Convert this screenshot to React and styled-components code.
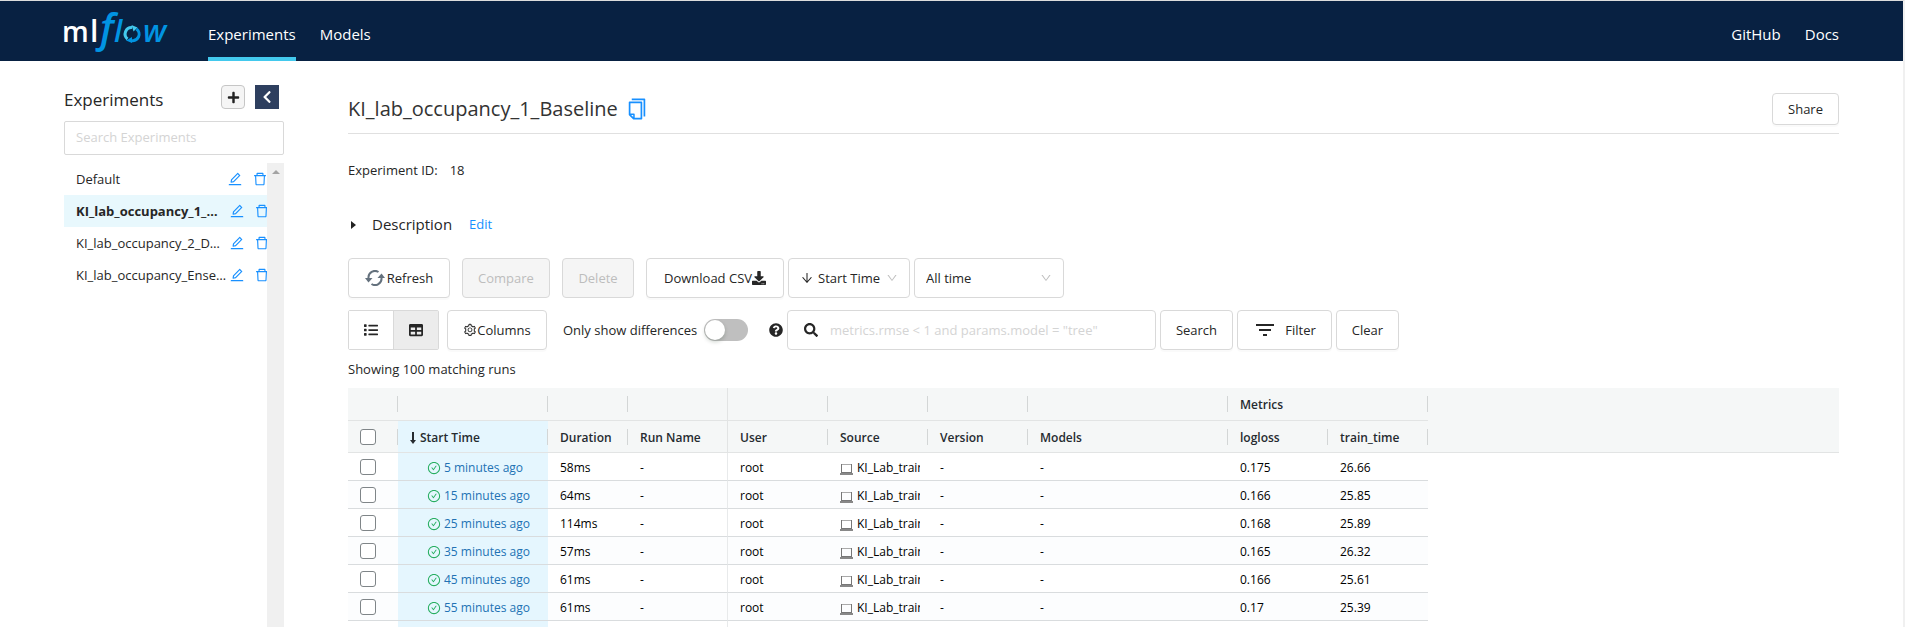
import React from "react";
import styled, { createGlobalStyle, css } from "styled-components";
import {
  AiOutlineArrowDown,
  AiOutlineCheckCircle,
  AiOutlineCopy,
  AiOutlineDelete,
  AiOutlineDown,
  AiOutlineEdit,
  AiOutlineSetting,
} from "react-icons/ai";
import {
  FaChevronLeft,
  FaDownload,
  FaList,
  FaPlus,
  FaQuestionCircle,
  FaSearch,
  FaTable,
} from "react-icons/fa";
import { MdFilterList } from "react-icons/md";

const GlobalStyle = createGlobalStyle`
  *, *::before, *::after { box-sizing: border-box; }
  body {
    margin: 0;
    overflow: hidden;
    background: #fff;
    color: #262626;
    font: 13px/20px "Open Sans", "Noto Sans", sans-serif;
  }
  button, input, select { font: inherit; color: inherit; margin: 0; }
  h1, h2, h3, p, ul { margin: 0; padding: 0; font-weight: 400; }
  svg { display: block; flex: none; }
  a { text-decoration: none; }
`;

const Page = styled.div`
  display: flex;
  flex-direction: column;
  height: 100vh;
  border-top: 1px solid #dcdcdc;
  border-right: 2px solid #f0f0f0;
`;

const Header = styled.header`
  display: flex;
  align-items: flex-start;
  height: 60px;
  flex: none;
  padding: 0 64px 0 60px;
  background: #082142;
`;

const LogoLink = styled.a`
  display: block;
  width: 148px;
`;

const Nav = styled.nav`
  display: flex;
  gap: 24px;
  margin-left: ${(p) => (p.$end ? "auto" : "0")};
`;

const NavLink = styled.a`
  height: 60px;
  padding-top: 23px;
  border-bottom: 4px solid ${(p) => (p.$active ? "#43c9ed" : "transparent")};
  color: #fff;
  font-size: 15px;
`;

const Body = styled.div`
  display: flex;
  gap: 64px;
  flex: 1;
  min-height: 0;
  padding: 0 64px;
`;

const Sidebar = styled.aside`
  display: flex;
  flex-direction: column;
  width: 220px;
  flex: none;
  padding-top: 24px;
`;

const SidebarHead = styled.div`
  display: flex;
  align-items: center;
  gap: 10px;
  height: 24px;
  padding-right: 5px;
  margin-bottom: 12px;
`;

const SidebarTitle = styled.h2`
  flex: 1;
  padding-top: 6px;
  font-size: 17px;
  line-height: 24px;
`;

const SquareButton = styled.button`
  display: grid;
  place-items: center;
  width: 24px;
  height: 24px;
  padding: 0;
  border: ${(p) => (p.$dark ? "0" : "1px solid #c6c6c6")};
  border-radius: ${(p) => (p.$dark ? "0" : "4px")};
  background: ${(p) => (p.$dark ? "#2e3f5f" : "#f5f5f5")};
  color: ${(p) => (p.$dark ? "#fff" : "#222")};
`;

const fieldBorder = css`
  border: 1px solid #d9d9d9;
  border-radius: 4px;
  background: #fff;
`;

const SidebarSearch = styled.input`
  ${fieldBorder}
  border-radius: 2px;
  width: 100%;
  height: 34px;
  padding: 0 11px 2px;
  &::placeholder { color: #d4d4d4; opacity: 1; }
`;

const ListArea = styled.div`
  display: flex;
  flex: 1;
  margin-top: 8px;
`;

const ExperimentList = styled.ul`
  flex: 1;
  min-width: 0;
  list-style: none;
`;

const ExperimentItem = styled.li`
  display: flex;
  align-items: center;
  height: 32px;
  padding-left: 12px;
  overflow: hidden;
  background: ${(p) => (p.$active ? "#e8f8fd" : "transparent")};
`;

const ExperimentName = styled.a`
  flex: none;
  width: ${(p) => (p.$short ? "151px" : "153px")};
  padding-right: ${(p) => (p.$active ? "4px" : "0")};
  overflow: hidden;
  white-space: nowrap;
  text-overflow: ellipsis;
  color: #262626;
  font-weight: ${(p) => (p.$active ? 700 : 400)};
`;

const IconButton = styled.button`
  flex: none;
  width: 16px;
  height: 16px;
  padding: 0;
  margin-right: 9px;
  border: 0;
  background: none;
  color: #1890ff;
`;

const ScrollTrack = styled.div`
  display: flex;
  justify-content: center;
  width: 17px;
  padding-top: 7px;
  background: #f0f0f0;
`;

const ScrollArrow = styled.span`
  width: 0;
  height: 0;
  border: 4px solid transparent;
  border-top: 0;
  border-bottom-color: #a3a3a3;
`;

const Main = styled.main`
  flex: 1;
  min-width: 0;
  padding-top: 32px;
`;

const TitleRow = styled.div`
  display: flex;
  align-items: center;
  gap: 7px;
  height: 41px;
  padding-bottom: 8px;
  border-bottom: 1px solid #e0e0e0;
`;

const Title = styled.h1`
  font-size: 20px;
  line-height: 28px;
  font-weight: 500;
  color: #333;
`;

const CopyButton = styled.button`
  padding: 0;
  border: 0;
  background: none;
  color: #1890ff;
`;

const Button = styled.button`
  ${fieldBorder}
  display: flex;
  align-items: center;
  justify-content: center;
  flex: none;
  gap: ${(p) => p.$gap || 0}px;
  width: ${(p) => p.$w}px;
  height: ${(p) => (p.$small ? 32 : 40)}px;
  padding: 0;
  box-shadow: 0 2px 0 rgba(0, 0, 0, 0.02);
  &:disabled {
    background: #f5f5f5;
    color: #bdbdbd;
    box-shadow: none;
  }
`;

const ShareSlot = styled.div`
  margin-left: auto;
`;

const Meta = styled.p`
  margin-top: 26px;
`;

const MetaLabel = styled.span`
  margin-right: 12px;
`;

const DescriptionRow = styled.div`
  display: flex;
  align-items: center;
  height: 24px;
  margin: 32px 0 22px;
`;

const Caret = styled.span`
  width: 0;
  height: 0;
  margin: 2px 16px 0 3px;
  border: 4px solid transparent;
  border-left: 5px solid #222;
  border-right: 0;
`;

const DescriptionTitle = styled.h3`
  margin-right: 17px;
  font-size: 15px;
  line-height: 24px;
`;

const BlueLink = styled.a`
  color: #1890ff;
`;

const Toolbar = styled.div`
  display: flex;
  align-items: center;
  gap: ${(p) => p.$gap}px;
  height: 40px;
  margin-bottom: 12px;
`;

const Cluster = styled.div`
  display: flex;
  align-items: center;
  gap: 4px;
`;

const SelectBox = styled.label`
  ${fieldBorder}
  display: flex;
  align-items: center;
  gap: 4px;
  width: ${(p) => p.$w}px;
  height: 40px;
  padding: 0 11px;
  svg:last-child { color: #bfbfbf; }
`;

const Select = styled.select`
  appearance: none;
  flex: 1;
  min-width: 0;
  padding: 0;
  border: 0;
  background: none;
  outline: 0;
`;

const ViewToggle = styled.div`
  ${fieldBorder}
  display: flex;
  width: 91px;
  height: 40px;
  margin-right: 8px;
  border-radius: 2px;
`;

const ViewOption = styled.button`
  display: grid;
  place-items: center;
  flex: 1;
  padding: 0;
  border: 0;
  border-left: ${(p) => (p.$active ? "1px solid #d9d9d9" : "0")};
  background: ${(p) => (p.$active ? "#ececec" : "#fff")};
`;

const SwitchLabel = styled.label`
  display: flex;
  align-items: center;
  gap: 5px;
  margin: 0 21px 0 16px;
  white-space: nowrap;
`;

const SwitchText = styled.span`
  width: 136px;
`;

const Switch = styled.input`
  appearance: none;
  display: flex;
  width: 44px;
  height: 22px;
  padding: 1px;
  border-radius: 11px;
  background: #bfbfbf;
  &::before {
    content: "";
    width: 20px;
    height: 20px;
    border-radius: 10px;
    background: #fff;
    box-shadow: 0 2px 4px rgba(0, 35, 11, 0.2);
  }
`;

const SearchBox = styled.label`
  ${fieldBorder}
  display: flex;
  align-items: center;
  gap: 12px;
  width: 369px;
  height: 40px;
  padding: 0 16px;
`;

const SearchInput = styled.input`
  flex: 1;
  min-width: 0;
  padding: 0;
  border: 0;
  outline: 0;
  background: none;
  &::placeholder { color: #d4d4d4; opacity: 1; }
`;

const Count = styled.p`
  margin: -3px 0 9px;
`;

const Table = styled.table`
  width: 100%;
  border-collapse: separate;
  border-spacing: 0;
  table-layout: fixed;
  font-size: 12px;
  line-height: 16px;
`;

const Col = styled.col`
  width: ${(p) => (p.$w ? `${p.$w}px` : "auto")};
`;

const HeadCell = styled.th`
  height: ${(p) => (p.$group ? 33 : 32)}px;
  padding: ${(p) => (p.$check ? "0 12px" : "2px 12px 0")};
  text-align: left;
  font-weight: 600;
  white-space: nowrap;
  color: #262b30;
  border-bottom: ${(p) => (p.$open ? "0" : "1px solid #e2e4e4")};
  background: ${(p) => (p.$sorted ? "#e5f6fe" : "#f5f7f7")};
  ${(p) =>
    p.$pinEdge
      ? "border-right: 1px solid #e2e4e4;"
      : !p.$last &&
        css`
          background-image: linear-gradient(#d3d6d6, #d3d6d6);
          background-repeat: no-repeat;
          background-size: 1px 16px;
          background-position: right center;
        `}
`;

const Row = styled.tr`
  background: ${(p) => (p.$odd ? "#fcfdfe" : "#fff")};
`;

const Cell = styled.td`
  height: 28px;
  padding: ${(p) => (p.$check ? "0 12px" : "2px 12px 0")};
  overflow: hidden;
  white-space: nowrap;
  color: #000;
  border-bottom: 1px solid #d9dcde;
  ${(p) => p.$sorted && "background: #e5f6fe;"}
  ${(p) => p.$pinEdge && "border-right: 1px solid #e8eaeb;"}
`;

const EmptyCell = styled.td`
  background: #fff;
`;

const Checkbox = styled.input`
  appearance: none;
  display: block;
  width: 16px;
  height: 16px;
  border: 1px solid #7f8588;
  border-radius: 3px;
  background: #fff;
`;

const SortLabel = styled.span`
  display: flex;
  align-items: center;
  gap: 4px;
`;

const RunLink = styled.a`
  display: flex;
  align-items: center;
  gap: 3px;
  padding-left: 17px;
  color: #2272b4;
  svg { color: #27ae60; }
`;

const SourceLine = styled.span`
  display: flex;
  align-items: center;
  gap: 4px;
  margin-right: -4px;
  overflow: hidden;
  svg { margin-top: 2px; }
`;

function MlflowLogo() {
  return (
    <svg width="112" height="60" viewBox="-4 0 112 60" role="img" aria-label="mlflow">
      <g fontFamily='"Open Sans", sans-serif' fontWeight="600">
        <text x="-2" y="41" fontSize="28" fill="#fff">m</text>
        <text x="26" y="41" fontSize="30" fill="#fff">l</text>
        <g fill="#0194e2" fontStyle="italic">
          <text x="36" y="41" fontSize="40">f</text>
          <text x="50" y="41" fontSize="30">l</text>
          <text x="79" y="41" fontSize="31">w</text>
        </g>
      </g>
      <g fill="none" strokeWidth="3">
        <path d="M63.500 38A6.500 6.500 0 0 1 68 26.500" stroke="#43c9ed" />
        <path d="M67 39.500A6.500 6.500 0 0 0 72.500 28" stroke="#0194e2" />
      </g>
      <path d="M67.500 24L73.500 26.500L69.500 30.500Z" fill="#43c9ed" />
      <path d="M68 36L62 39.500L68 42Z" fill="#0194e2" />
    </svg>
  );
}

function RefreshIcon() {
  return (
    <svg width="20" height="16" viewBox="0 0 20 16" aria-hidden="true">
      <g fill="none" stroke="#64717d" strokeWidth="2">
        <path d="M3.500 9V8A6.500 6.500 0 0 1 13.500 2" />
        <path d="M16.500 7V8A6.500 6.500 0 0 1 6.500 14" />
      </g>
      <path d="M0 8H7.500L3.500 12.500Z" fill="#64717d" />
      <path d="M12.500 8H20L16.500 3.500Z" fill="#64717d" />
    </svg>
  );
}

function SortArrowIcon() {
  return (
    <svg width="6" height="12" viewBox="0 0 6 12" aria-hidden="true">
      <path d="M2 0H4V8H6L3 12L0 8H2Z" fill="#262b30" />
    </svg>
  );
}

function LaptopIcon() {
  return (
    <svg width="13" height="12" viewBox="0 0 13 12" aria-hidden="true">
      <rect x="1.500" y="1.500" width="10" height="8" fill="none" stroke="#777" />
      <rect x="2" y="1" width="9" height="1" fill="#aaa" />
      <rect x="0" y="10" width="13" height="2" fill="#888" />
    </svg>
  );
}

const experiments = [
  "Default",
  "KI_lab_occupancy_1_Baseline",
  "KI_lab_occupancy_2_DNN",
  "KI_lab_occupancy_Ensemble",
];

const columns = [50, 150, 80, 100, 100, 100, 100, 200, 100, 100, null];

const runs = [
  ["5 minutes ago", "58ms", "0.175", "26.66"],
  ["15 minutes ago", "64ms", "0.166", "25.85"],
  ["25 minutes ago", "114ms", "0.168", "25.89"],
  ["35 minutes ago", "57ms", "0.165", "26.32"],
  ["45 minutes ago", "61ms", "0.166", "25.61"],
  ["55 minutes ago", "61ms", "0.17", "25.39"],
];

function ExperimentsPanel() {
  return (
    <Sidebar>
      <SidebarHead>
        <SidebarTitle>Experiments</SidebarTitle>
        <SquareButton aria-label="New experiment"><FaPlus size={13} /></SquareButton>
        <SquareButton $dark aria-label="Collapse sidebar"><FaChevronLeft size={14} /></SquareButton>
      </SidebarHead>
      <SidebarSearch placeholder="Search Experiments" aria-label="Search Experiments" />
      <ListArea>
        <ExperimentList>
          {experiments.map((name, i) => (
            <ExperimentItem key={name} $active={i === 1}>
              <ExperimentName href="#" $active={i === 1} $short={i === 0}>{name}</ExperimentName>
              <IconButton aria-label={`Rename ${name}`}><AiOutlineEdit size={16} /></IconButton>
              <IconButton aria-label={`Delete ${name}`}><AiOutlineDelete size={16} /></IconButton>
            </ExperimentItem>
          ))}
        </ExperimentList>
        <ScrollTrack><ScrollArrow /></ScrollTrack>
      </ListArea>
    </Sidebar>
  );
}

function RunsTable() {
  return (
    <Table>
      <colgroup>{columns.map((w, i) => <Col key={i} $w={w} />)}</colgroup>
      <thead>
        <tr>
          {[0, 1, 2, 3, 4, 5, 6, 7].map((i) => (
            <HeadCell key={i} $group $pinEdge={i === 3} />
          ))}
          <HeadCell $group colSpan={2}>Metrics</HeadCell>
          <HeadCell $group $open $last />
        </tr>
        <tr>
          <HeadCell $check><Checkbox type="checkbox" aria-label="Select all runs" /></HeadCell>
          <HeadCell $sorted>
            <SortLabel><SortArrowIcon />Start Time</SortLabel>
          </HeadCell>
          <HeadCell>Duration</HeadCell>
          <HeadCell $pinEdge>Run Name</HeadCell>
          <HeadCell>User</HeadCell>
          <HeadCell>Source</HeadCell>
          <HeadCell>Version</HeadCell>
          <HeadCell>Models</HeadCell>
          <HeadCell>logloss</HeadCell>
          <HeadCell>train_time</HeadCell>
          <HeadCell $last />
        </tr>
      </thead>
      <tbody>
        {runs.map(([started, duration, logloss, trainTime], i) => (
          <Row key={started} $odd={i % 2 === 1}>
            <Cell $check><Checkbox type="checkbox" aria-label={`Select run from ${started}`} /></Cell>
            <Cell $sorted><RunLink href="#"><AiOutlineCheckCircle size={14} />{started}</RunLink></Cell>
            <Cell>{duration}</Cell>
            <Cell $pinEdge>-</Cell>
            <Cell>root</Cell>
            <Cell><SourceLine><LaptopIcon />KI_Lab_train</SourceLine></Cell>
            <Cell>-</Cell>
            <Cell>-</Cell>
            <Cell>{logloss}</Cell>
            <Cell>{trainTime}</Cell>
            <EmptyCell />
          </Row>
        ))}
        <Row aria-hidden="true">
          <Cell />
          <Cell $sorted />
          <Cell />
          <Cell $pinEdge />
          <Cell colSpan={6} />
          <EmptyCell />
        </Row>
      </tbody>
    </Table>
  );
}

export default function App() {
  return (
    <>
      <GlobalStyle />
      <Page>
        <Header>
          <LogoLink href="#"><MlflowLogo /></LogoLink>
          <Nav>
            <NavLink href="#" $active>Experiments</NavLink>
            <NavLink href="#">Models</NavLink>
          </Nav>
          <Nav $end>
            <NavLink href="#">GitHub</NavLink>
            <NavLink href="#">Docs</NavLink>
          </Nav>
        </Header>
        <Body>
          <ExperimentsPanel />
          <Main>
            <TitleRow>
              <Title>KI_lab_occupancy_1_Baseline</Title>
              <CopyButton aria-label="Copy experiment name"><AiOutlineCopy size={24} /></CopyButton>
              <ShareSlot><Button $w={67} $small>Share</Button></ShareSlot>
            </TitleRow>
            <Meta><MetaLabel>Experiment ID:</MetaLabel>18</Meta>
            <DescriptionRow>
              <Caret />
              <DescriptionTitle>Description</DescriptionTitle>
              <BlueLink href="#">Edit</BlueLink>
            </DescriptionRow>
            <Toolbar $gap={12}>
              <Button $w={102} $gap={2}><RefreshIcon />Refresh</Button>
              <Button $w={88} disabled>Compare</Button>
              <Button $w={72} disabled>Delete</Button>
              <Cluster>
                <Button $w={138}>Download CSV<FaDownload size={14} /></Button>
                <SelectBox $w={122}>
                  <AiOutlineArrowDown size={14} />
                  <Select aria-label="Sort by"><option>Start Time</option></Select>
                  <AiOutlineDown size={12} />
                </SelectBox>
                <SelectBox $w={150}>
                  <Select aria-label="Time range"><option>All time</option></Select>
                  <AiOutlineDown size={12} />
                </SelectBox>
              </Cluster>
            </Toolbar>
            <Toolbar $gap={0}>
              <ViewToggle>
                <ViewOption aria-label="List view"><FaList size={14} /></ViewOption>
                <ViewOption $active aria-label="Grid view"><FaTable size={14} /></ViewOption>
              </ViewToggle>
              <Button $w={100}><AiOutlineSetting size={14} />Columns</Button>
              <SwitchLabel>
                <SwitchText>Only show differences</SwitchText>
                <Switch type="checkbox" role="switch" />
              </SwitchLabel>
              <Cluster>
                <FaQuestionCircle size={14} />
                <SearchBox>
                  <FaSearch size={14} />
                  <SearchInput
                    aria-label="Search runs"
                    placeholder={'metrics.rmse < 1 and params.model = "tree"'}
                  />
                </SearchBox>
                <Button $w={73}>Search</Button>
                <Button $w={95} $gap={8}><MdFilterList size={24} />Filter</Button>
                <Button $w={63}>Clear</Button>
              </Cluster>
            </Toolbar>
            <Count>Showing 100 matching runs</Count>
            <RunsTable />
          </Main>
        </Body>
      </Page>
    </>
  );
}
